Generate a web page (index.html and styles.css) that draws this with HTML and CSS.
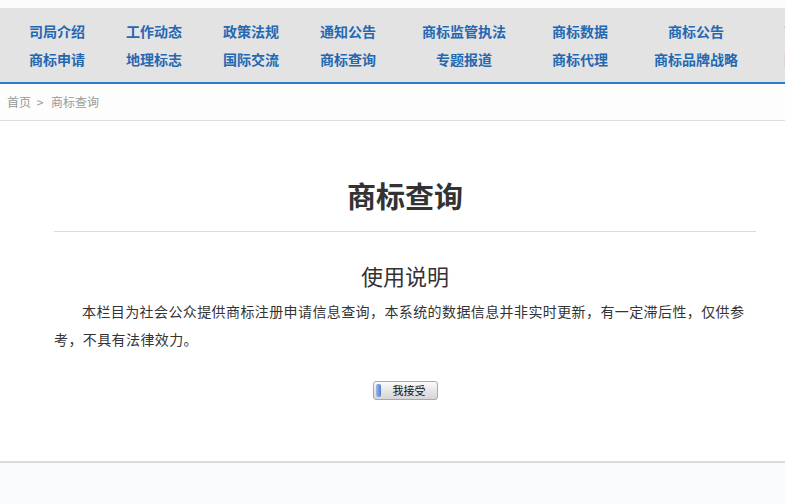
FILE: index.html
```html
<!DOCTYPE html>
<html lang="zh-CN">
<head>
    <meta charset="UTF-8">
    <meta name="viewport" content="width=device-width, initial-scale=1.0">
    <title>商标查询</title>
    <link rel="stylesheet" href="styles.css">
</head>
<body>
    <div class="wrap">
        <!-- 导航 -->
        <div class="top-strip"></div>
        <ul class="nav">
            <li><a href="#">司局介绍</a><a href="#">商标申请</a></li>
            <li><a href="#">工作动态</a><a href="#">地理标志</a></li>
            <li><a href="#">政策法规</a><a href="#">国际交流</a></li>
            <li><a href="#">通知公告</a><a href="#">商标查询</a></li>
            <li class="wide"><a href="#">商标监管执法</a><a href="#">专题报道</a></li>
            <li class="wide"><a href="#">商标数据</a><a href="#">商标代理</a></li>
            <li class="wide"><a href="#">商标公告</a><a href="#">商标品牌战略</a></li>
            <li class="wide"><a href="#">商标审查</a><a href="#">图片新闻</a></li>
        </ul>

        <!-- 面包屑 -->
        <div class="crumb"><a href="#">首页</a> &gt; <span>商标查询</span></div>

        <!-- 正文 -->
        <div class="content">
            <h1 class="title">商标查询</h1>
            <h2 class="subtitle">使用说明</h2>
            <p class="desc">本栏目为社会公众提供商标注册申请信息查询，本系统的数据信息并非实时更新，有一定滞后性，仅供参考，不具有法律效力。</p>
            <div class="btn-row">
                <button class="btn-accept" type="button">我接受</button>
            </div>
        </div>

        <div class="footer"></div>
    </div>
</body>
</html>
```

FILE: styles.css
```css
html, body {
    margin: 0;
    padding: 0;
    overflow: hidden;
    background: #fff;
}
body {
    font-family: "Noto Sans CJK SC", "Liberation Sans", sans-serif;
    color: #333;
}
.wrap {
    width: 810px;
}
.top-strip {
    height: 8px;
    background: #fcfcfe;
}
.nav {
    list-style: none;
    margin: 0;
    padding: 9px 0 9px 29px;
    height: 56px;
    background: #e3e3e3;
    border-bottom: 2px solid #2b7dcc;
    display: flex;
    white-space: nowrap;
}
.nav li {
    display: flex;
    flex-direction: column;
    align-items: center;
    margin-left: 41px;
    flex-shrink: 0;
}
.nav li:first-child {
    margin-left: 0;
}
.nav li.wide {
    margin-left: 46px;
}
.nav a {
    display: block;
    font-size: 14px;
    font-weight: bold;
    line-height: 28px;
    color: #2468b2;
    text-decoration: none;
}
.crumb {
    height: 36px;
    line-height: 36px;
    padding-left: 7px;
    font-size: 12px;
    color: #999;
    background: #fdfdfd;
    border-bottom: 1px solid #dedede;
}
.crumb a {
    color: #999;
    text-decoration: none;
    margin-right: 3px;
}
.crumb span {
    margin-left: 5px;
}
.content {
    margin: 0 54px;
    padding-top: 54px;
    padding-bottom: 61px;
}
.title {
    margin: 0;
    font-size: 29px;
    line-height: 40px;
    font-weight: bold;
    text-align: center;
    color: #333;
    padding-bottom: 16px;
    border-bottom: 1px solid #dadada;
}
.subtitle {
    margin: 28px 0 7px;
    font-size: 22px;
    line-height: 30px;
    font-weight: normal;
    text-align: center;
    color: #333;
}
.desc {
    margin: 0;
    font-size: 14px;
    line-height: 28px;
    text-indent: 28px;
    letter-spacing: 0.4px;
    color: #333;
}
.btn-row {
    margin-top: 28px;
    text-align: center;
    line-height: 0;
}
.btn-accept {
    position: relative;
    width: 65px;
    height: 19px;
    padding: 0 0 0 8px;
    font-family: "Noto Sans CJK SC", sans-serif;
    font-size: 11px;
    line-height: 17px;
    color: #111;
    border: 1px solid #a9a9a9;
    border-radius: 3px;
    background: linear-gradient(#fbfbfb, #e6e6e6 50%, #d6d6d6);
    cursor: pointer;
}
.btn-accept::before {
    content: "";
    position: absolute;
    left: 2px;
    top: 2px;
    width: 5px;
    height: 13px;
    border-radius: 2px;
    background: linear-gradient(90deg, #9fb9e6, #4f7fd0);
}
.footer {
    height: 60px;
    background: #fafbfc;
    border-top: 2px solid #dcdcdc;
}
```
